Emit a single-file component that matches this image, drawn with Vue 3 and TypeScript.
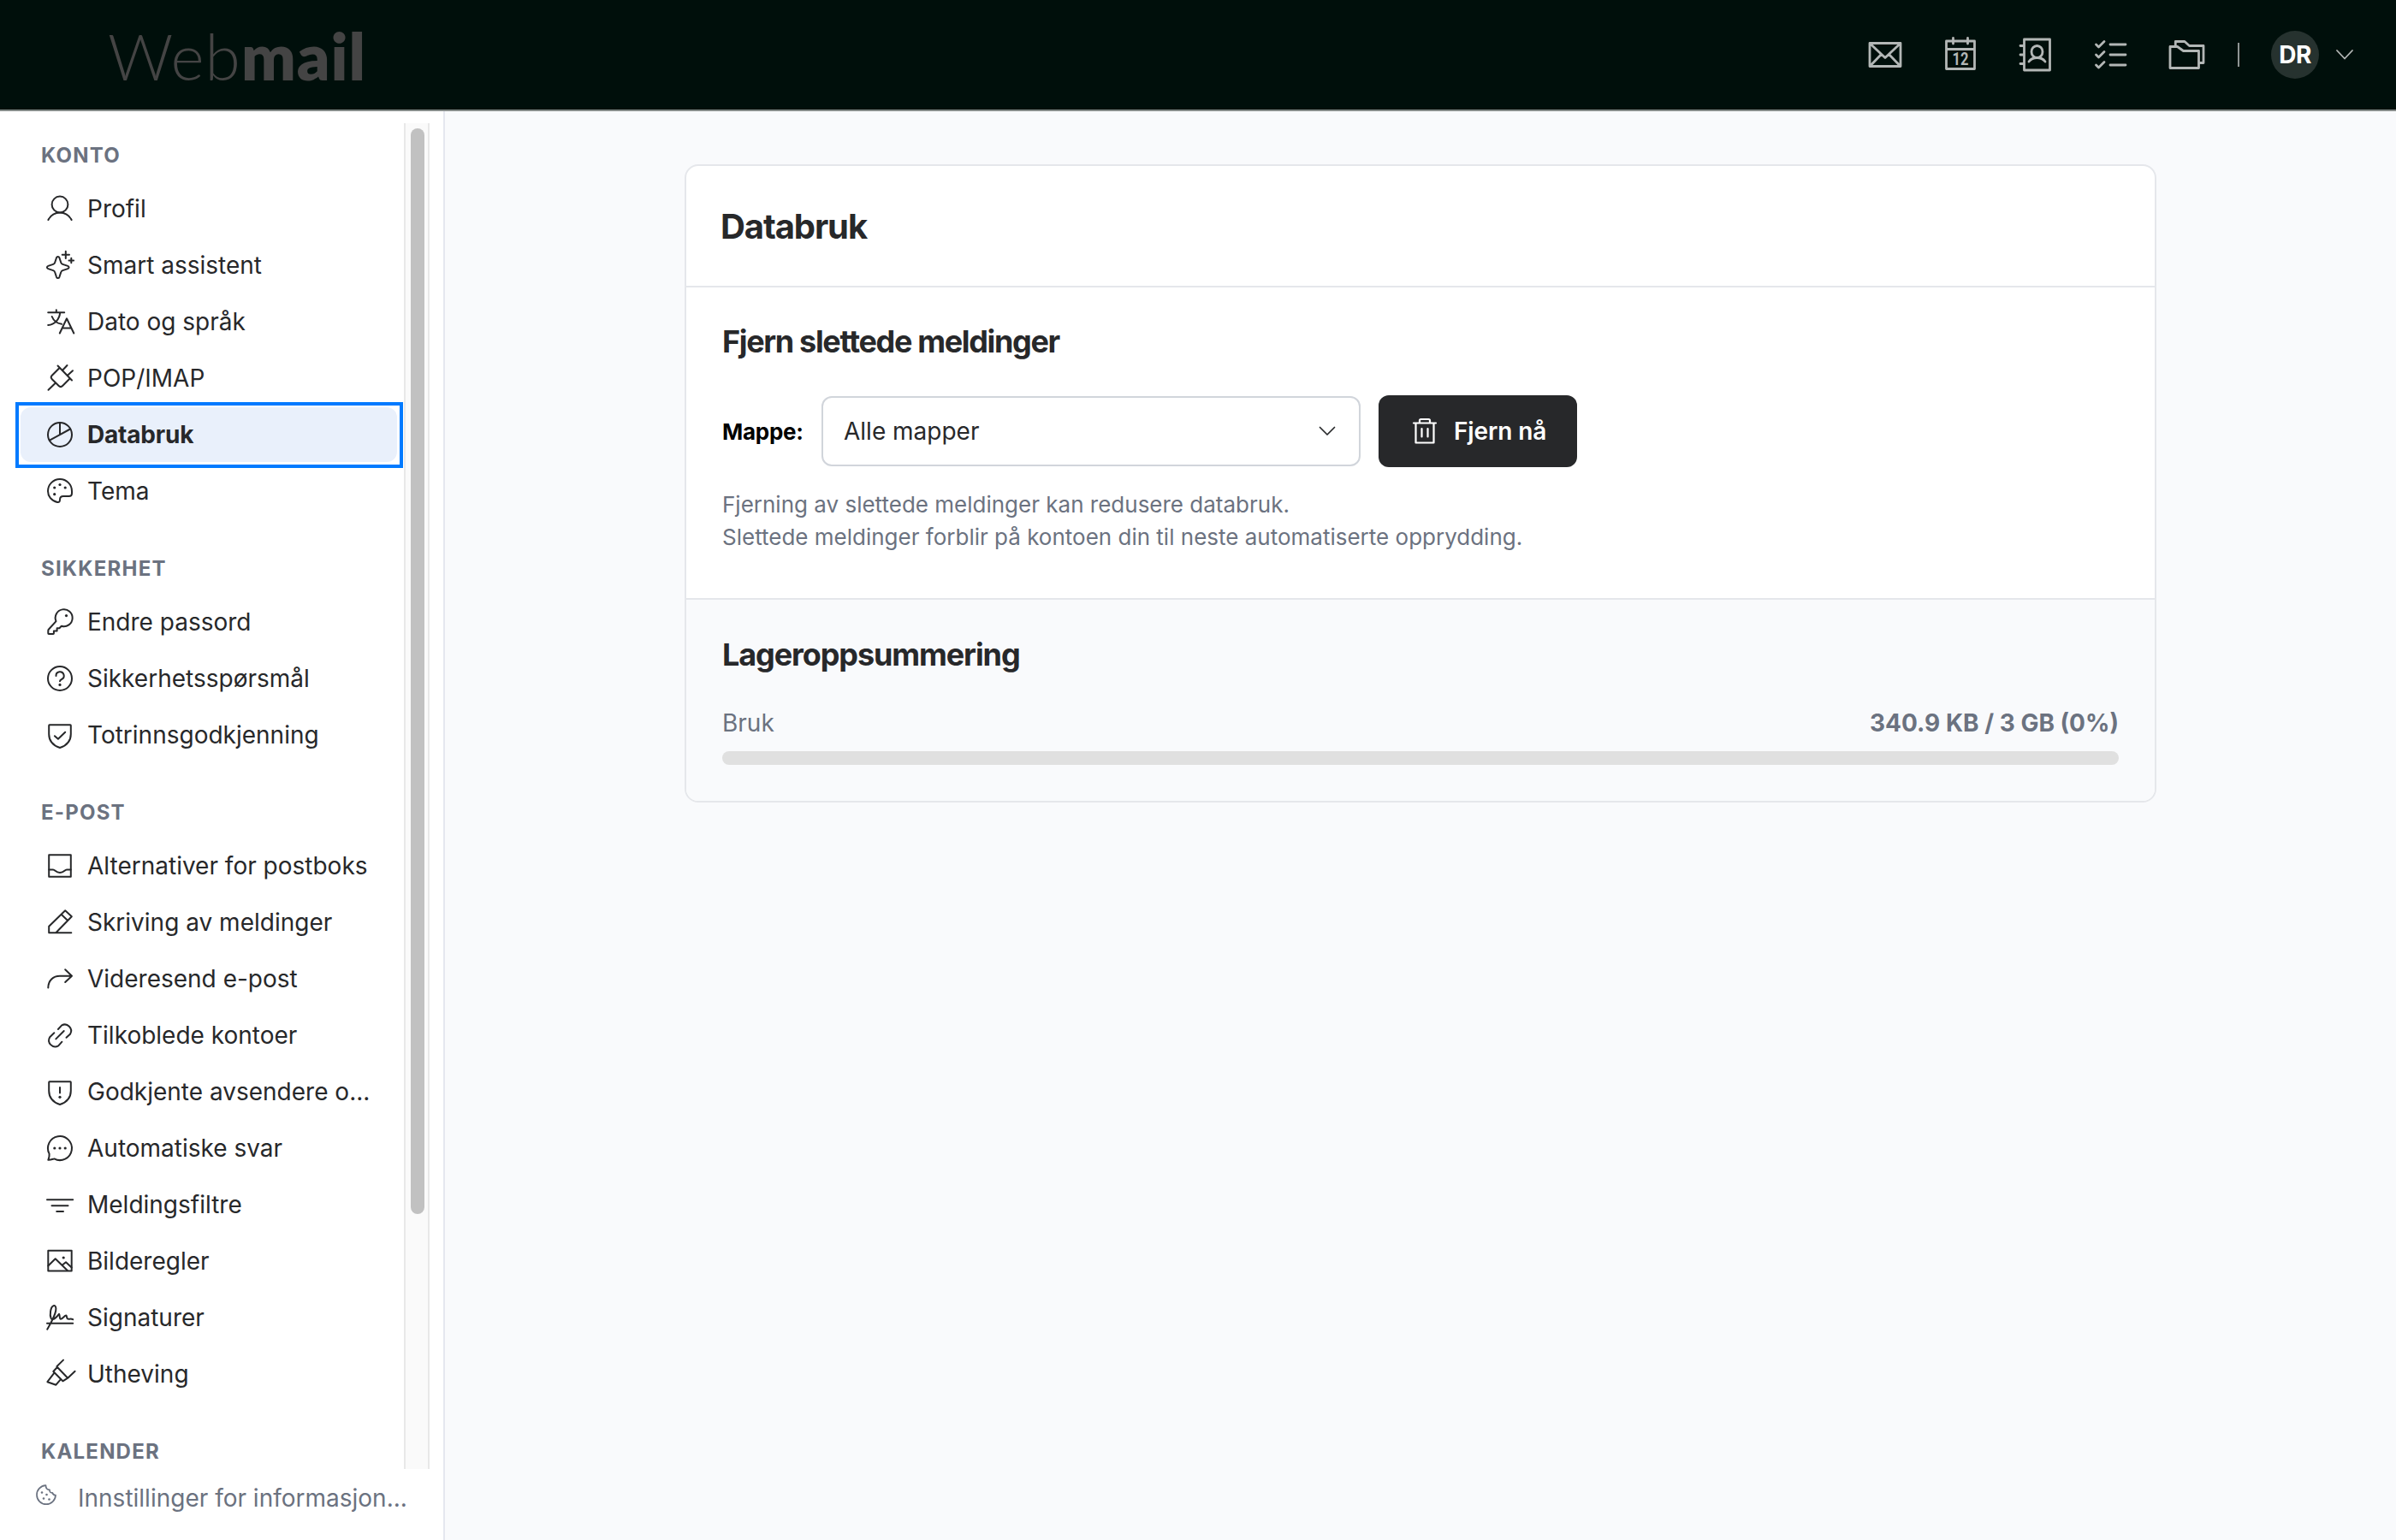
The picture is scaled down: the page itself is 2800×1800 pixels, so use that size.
<script setup lang="ts">
interface NavItem {
  label: string
  paths: string[]
  dots?: [number, number][]
}
interface NavGroup {
  title: string
  items: NavItem[]
}

const circle = 'M30 16A14 14 0 1 1 2 16A14 14 0 1 1 30 16Z'
const shield = 'M3.8 4.3H28.2Q28.8 4.3 28.8 5V15C28.8 23 23.5 28.5 16 31C8.500 28.5 3.200 23 3.200 15V5Q3.200 4.300 3.800 4.300Z'

const groups: NavGroup[] = [
  {
    title: 'KONTO',
    items: [
      { label: 'Profil', paths: ['M25.4 11A9.4 9.4 0 1 1 6.600 11A9.400 9.400 0 1 1 25.400 11Z', 'M2.400 29C5 24 10 20.500 16 20.500S27 24 29.600 29'] },
      {
        label: 'Smart assistent',
        paths: [
          'M12 7.200C12.600 5.500 14.800 5.500 15.400 7.200L17.300 13C17.600 14 18.300 14.600 19.200 14.900L25.200 16.900C27 17.500 27 19.500 25.200 20.100L19.200 22.100C18.300 22.400 17.600 23 17.300 24L15.400 29.800C14.800 31.500 12.600 31.500 12 29.800L10.100 24C9.800 23 9.100 22.400 8.200 22.100L2.300 20.100C.5 19.500.5 17.500 2.300 16.900L8.200 14.900C9.100 14.600 9.800 14 10.100 13Z',
          'M22.800-.2V8M18.700 3.800H27M29.300 7.700V13.200M26.500 10.400H32.100',
        ],
      },
      { label: 'Dato og språk', paths: ['M2.200 5.300H21.200M11.800 2.200V5.300M16.200 5.300C15.500 13 10 19.500 2.200 20M6.700 10C8.500 14.500 12.500 18 18 18.800', 'M15.800 29.500L24 12.300L32.300 29.500M18.600 23.500H29.500'] },
      { label: 'POP/IMAP', paths: ['M2.500 29.800L10.500 22M13.500 1.500L30 18.500M15.800 3.800L6.800 12.800C5.400 14.200 5.400 15.800 6.800 17.200L14.700 25C16.100 26.400 17.700 26.400 19.100 25L27.800 16.300', 'M19.300 6.500L24.500 1M25.200 12.500L31 7.200'] },
      { label: 'Databruk', paths: [circle, 'M16 2V16M4 22.700L28 9.500'] },
      { label: 'Tema', paths: ['M13 29C6 27.500 2 22 2 16A14 14 0 0 1 30 16V18.500C30 20.800 28.600 22 26.500 22H20C17.500 22 16 23.500 16 26C16 28.500 15 29.400 13 29Z'], dots: [[16, 8.500], [22.200, 12], [9.700, 12], [9.700, 19.700]] },
    ],
  },
  {
    title: 'SIKKERHET',
    items: [
      { label: 'Endre passord', paths: ['M11.500 15.200L3 24.500Q2.300 25.300 2.300 26V29.200Q2.300 30 3 30H8.200Q8.900 30 8.900 29.200V26.500H12.600V23.200H15.400L17.800 20.800A10 10 0 1 0 11.500 15.200Z'], dots: [[23.500, 8.600]] },
      { label: 'Sikkerhetsspørsmål', paths: [circle, 'M11.500 13A4.600 4.600 0 1 1 18 17C16.700 17.600 16 18 16 19.300'], dots: [[16, 23.400]] },
      { label: 'Totrinnsgodkjenning', paths: [shield, 'M9.900 17.200L13.900 20.800L22.200 12.700'] },
    ],
  },
  {
    title: 'E-POST',
    items: [
      { label: 'Alternativer for postboks', paths: ['M3.200 3.200H28.800V28.800H3.200Z', 'M3.200 20.500H8C10.500 20.500 11 24 16 24S21.500 20.500 24 20.500H28.800'] },
      { label: 'Skriving av meldinger', paths: ['M29.300 28.300H3.200V20.800L22.200 2.200L29.800 9.200L11.300 28.300M17.600 6.800L25.200 13.900'] },
      { label: 'Videresend e-post', paths: ['M2.300 26.500C2.300 18 8 12.700 16 12.700H30M22.200 5.300L30 12.700L22.200 20'] },
      { label: 'Tilkoblede kontoer', paths: ['M13.900 9L18.200 4.400A7.400 7.400 0 0 1 28.200 14.400L23.500 18.800M9.300 13.300L4.200 18.200A7.400 7.400 0 0 0 14.200 28.400L18.400 23.700M11.300 20.400L20.700 11'] },
      { label: 'Godkjente avsendere o...', paths: [shield, 'M16 11V17.500'], dots: [[16, 22.300]] },
      { label: 'Automatiske svar', paths: ['M3.600 22.600A14 14 0 1 1 9.400 28.400C7.200 29 5 29.900 2.300 29.800C3.300 27.500 3.900 25.500 3.600 22.600Z'], dots: [[9.800, 16], [16, 16], [22.200, 16]] },
      { label: 'Meldingsfiltre', paths: ['M1 10.300H31.200M6.500 17.200H25.500M12.200 24H20'] },
      { label: 'Bilderegler', paths: ['M2.300 3.800H29.700V27.600H2.300Z', 'M2.300 21.500L10.700 13.300L24.800 27M19 20.600L23 17.200L29.700 23.500'], dots: [[20.200, 12]] },
      { label: 'Signaturer', paths: ['M1.200 29.700C5 23 10 15 11.200 8C12 3.500 10.500 1.500 8.500 2.200C5 3.500 3.800 13 5.700 17C7.800 20.500 12.500 15 15 11.800C16.200 13.500 15.200 17.500 17 17.700C19 17.700 21.300 13.500 23.400 13.600C24.500 14.500 23.500 17 25.200 17.600C27 18 29 17 31.200 18.200M1 22.800H31.200'] },
      { label: 'Utheving', paths: ['M20-.4L12.500 7V8.500L8.300 13L19.400 24.300L25.200 20.700L33.600 12.700M12.500 7.500L25.200 20.700M9.600 14.300L1.400 25.200L11.400 28.700L16.800 22.300'] },
    ],
  },
  { title: 'KALENDER', items: [] },
]
const active = 'Databruk'
</script>

<template>
  <div class="app">
    <header class="topbar">
      <div class="logo"><span class="thin">Web</span><span class="heavy">mail</span></div>
      <div class="tools">
        <svg class="tool" viewBox="0 0 44 44"><path d="M4 8.500H40V35.500H4ZM4.500 9L22 25.500L39.500 9M4.500 35L17.500 21.500M39.500 35L26.500 21.500" /></svg>
        <svg class="tool" viewBox="0 0 44 44">
          <path d="M5.500 6H38.500V38.500H5.500ZM5.500 15.500H38.500M13.500 2.500V9M30.500 2.500V9" />
          <text x="22" y="34" textLength="19" lengthAdjust="spacingAndGlyphs">12</text>
        </svg>
        <svg class="tool" viewBox="0 0 44 44"><path d="M8.500 4H38.500V40H8.500ZM4 11.500H8.500M4 22H8.500M4 32.500H8.500M30 18.500A6.500 7 0 1 1 17 18.500A6.500 7 0 1 1 30 18.500ZM14 30C16 27.200 19.500 25.500 23.500 25.500S31 27.200 33 30" /></svg>
        <svg class="tool" viewBox="0 0 44 44"><path d="M4.500 10L7.500 13L14 6.500M4.500 22L7.500 25L14 18.500M4.500 34L7.500 37L14 30.500M21 10H39M21 22H39M21 34H39" /></svg>
        <svg class="tool" viewBox="0 0 44 44"><path d="M3 12.500H11.500L18.500 17.500H36.500V37.500H3ZM9.300 12V6.500H20L25.500 11.500H42V31.500H37" /></svg>
      </div>
      <span class="divider"></span>
      <span class="avatar">DR</span>
      <svg class="caret" viewBox="0 0 20 12"><path d="M1 1L10 10.500L19 1" /></svg>
    </header>

    <aside class="sidebar">
      <div class="scroller">
        <nav class="nav">
          <section v-for="g in groups" :key="g.title" class="group">
            <h2>{{ g.title }}</h2>
            <a v-for="i in g.items" :key="i.label" class="item" :class="{ active: i.label === active }">
              <svg class="glyph" viewBox="0 0 32 32">
                <path v-for="p in i.paths" :key="p" :d="p" />
                <circle v-for="d in i.dots" :key="d.join()" :cx="d[0]" :cy="d[1]" r="1.6" />
              </svg>
              <span>{{ i.label }}</span>
            </a>
          </section>
        </nav>
        <div class="track"><div class="thumb"></div></div>
      </div>
      <a class="cookies">
        <svg class="cookie" viewBox="0 0 24 24">
          <path d="M11.500 1.200A11 11 0 1 0 23 12.500C21 12.700 19.800 11.700 19.300 9.800C16.800 10 15.800 8.600 16 6.400C13 6.200 11.500 4.200 11.500 1.200Z" />
          <circle v-for="d in [[7, 9.500], [12.500, 12], [9, 16.500], [15.500, 17.500]]" :key="d.join()" :cx="d[0]" :cy="d[1]" r="1.300" />
        </svg>
        <span>Innstillinger for informasjon...</span>
      </a>
    </aside>

    <main class="content">
      <article class="card">
        <div class="card-head"><h1>Databruk</h1></div>
        <section class="purge">
          <h3 class="h-purge">Fjern slettede meldinger</h3>
          <div class="controls">
            <label>Mappe:</label>
            <div class="select">
              <span>Alle mapper</span>
              <svg class="chev" viewBox="0 0 20 12"><path d="M1.500 1.500L10 10L18.500 1.500" /></svg>
            </div>
            <button type="button">
              <svg class="trash" viewBox="0 0 28 32"><path d="M1 6.500H27M3.500 6.500V29.500H24.500V6.500M8 6V3.500Q8 2 9.500 2H18.500Q20 2 20 3.500V6M10.500 13V22.500M17.500 13V22.500" /></svg>
              <span>Fjern nå</span>
            </button>
          </div>
          <p>Fjerning av slettede meldinger kan redusere databruk.<br />Slettede meldinger forblir på kontoen din til neste automatiserte opprydding.</p>
        </section>
        <section class="storage">
          <h3 class="h-storage">Lageroppsummering</h3>
          <div class="usage"><span>Bruk</span><strong>340.9 KB / 3 GB (0%)</strong></div>
          <div class="bar"></div>
        </section>
      </article>
    </main>
  </div>
</template>

<style>
body {
  margin: 0;
}
</style>

<style scoped>
.app {
  display: grid;
  grid-template: 130px 1fr / 520px 1fr;
  width: 100vw;
  height: 100vh;
  overflow: hidden;
  font-family: Inter, 'Liberation Sans', sans-serif;
  font-size: 28px;
  color: #27282a;
  background: #f9fafc;
}
h1, h2, h3, p {
  margin: 0;
}
svg {
  fill: none;
  stroke: currentColor;
  stroke-linecap: round;
  stroke-linejoin: round;
  overflow: visible;
  flex: none;
}
.topbar {
  grid-column: 1 / 3;
  display: flex;
  align-items: center;
  box-sizing: border-box;
  padding: 0 50px 0 126px;
  background: #000f0b;
  border-bottom: 2px solid #858b89;
  color: #b3b7b6;
}
.logo {
  flex: 1;
  font-family: Lato, sans-serif;
  font-size: 75px;
  line-height: 88px;
  padding-top: 2px;
  color: #444;
}
.thin {
  font-weight: 300;
  letter-spacing: 1px;
}
.heavy {
  font-weight: 800;
  letter-spacing: 1px;
}
.tools {
  display: flex;
  gap: 44px;
}
.tool {
  width: 44px;
  height: 44px;
  stroke-width: 2.8;
}
.tool text {
  fill: currentColor;
  stroke: none;
  font: 700 21px 'Roboto', sans-serif;
  text-anchor: middle;
}
.divider {
  width: 2px;
  height: 28px;
  margin: 0 37px 0 38px;
  background: #8f9594;
}
.avatar {
  width: 56px;
  line-height: 56px;
  border-radius: 50%;
  background: #26322f;
  color: #fff;
  font-weight: 700;
  letter-spacing: -0.5px;
  text-align: center;
}
.caret {
  width: 20px;
  height: 12px;
  margin-left: 20px;
  stroke-width: 1.8;
}
.sidebar {
  display: flex;
  flex-direction: column;
  min-height: 0;
  box-sizing: border-box;
  padding-top: 14px;
  background: #fff;
  border-right: 2px solid #e5e7ef;
}
.scroller {
  display: flex;
  height: 1573px;
}
.nav {
  height: 100%;
  box-sizing: border-box;
  padding: 8px 0 0 24px;
  flex: 0 0 472px;
  overflow: hidden;
}
.group + .group {
  margin-top: 29px;
}
h2 {
  padding-left: 24px;
  font-size: 24px;
  line-height: 60px;
  font-weight: 700;
  letter-spacing: 1.2px;
  color: #6b7280;
}
.item {
  position: relative;
  display: flex;
  align-items: center;
  gap: 16px;
  box-sizing: border-box;
  width: 440px;
  height: 64px;
  margin-bottom: 2px;
  padding: 0 0 0 30px;
  border-radius: 12px;
}
.item span {
  white-space: nowrap;
}
.item.active {
  background: #e9f0fb;
  font-weight: 700;
  letter-spacing: -0.2px;
}
.item.active::after {
  content: '';
  position: absolute;
  inset: -6px -7px -7px -6px;
  border: 4px solid #007aff;
}
.glyph {
  width: 32px;
  height: 32px;
  stroke-width: 2;
}
circle {
  fill: currentColor;
  stroke: none;
}
.track {
  box-sizing: border-box;
  width: 30px;
  padding: 6px;
  background: #fafafa;
  border: solid #e8e8e8;
  border-width: 0 2px;
}
.thumb {
  width: 16px;
  height: 1269px;
  border-radius: 8px;
  background: #c1c1c1;
}
.cookies {
  display: flex;
  gap: 25px;
  padding: 18px 0 0 42px;
  line-height: 32px;
  color: #6b7280;
  white-space: nowrap;
}
.cookie {
  width: 24px;
  height: 24px;
  stroke-width: 1.7;
}
.content {
  padding: 62px 280px 0;
}
.card {
  box-sizing: border-box;
  width: 1720px;
  height: 746px;
  border: 2px solid #e5e7eb;
  border-radius: 16px;
  background: #fff;
  overflow: hidden;
}
.card-head {
  height: 140px;
  padding-left: 40px;
  border-bottom: 2px solid #e5e7eb;
}
h1 {
  font-size: 40px;
  line-height: 141px;
  font-weight: 650;
  letter-spacing: -1.1px;
}
.purge {
  box-sizing: border-box;
  height: 365px;
  padding: 38px 42px 0;
  border-bottom: 2px solid #e5e7eb;
}
h3 {
  font-size: 36px;
  line-height: 50px;
  font-weight: 650;
}
.h-purge {
  letter-spacing: -1.35px;
}
.h-storage {
  letter-spacing: -1.1px;
}
.controls {
  display: flex;
  align-items: center;
  margin-top: 38px;
}
label {
  width: 116px;
  font-size: 26px;
  font-weight: 650;
  color: #000;
  letter-spacing: -0.25px;
}
.select {
  display: flex;
  align-items: center;
  justify-content: space-between;
  box-sizing: border-box;
  width: 630px;
  height: 82px;
  padding: 0 27px 0 24px;
  border: 2px solid #d1d5db;
  border-radius: 12px;
}
.chev {
  width: 20px;
  height: 12px;
  stroke-width: 1.7;
}
button {
  display: flex;
  align-items: center;
  gap: 20px;
  width: 232px;
  height: 84px;
  margin-left: 21px;
  padding: 0 0 0 40px;
  border: 0;
  border-radius: 12px;
  background: #27282a;
  color: #fff;
  font: 600 28px Inter, sans-serif;
  letter-spacing: -0.1px;
}
.trash {
  width: 28px;
  height: 32px;
  stroke-width: 2.2;
}
p {
  margin-top: 25px;
  font-size: 26px;
  line-height: 38px;
  color: #6b7280;
  white-space: nowrap;
}
.storage {
  height: 235px;
  padding: 39px 42px 0;
  background: #f9fafc;
}
.usage {
  display: flex;
  justify-content: space-between;
  margin-top: 35px;
  line-height: 40px;
  color: #6b7280;
}
.bar {
  height: 16px;
  margin-top: 13px;
  border-radius: 8px;
  background: #e0e0e0;
}
</style>
